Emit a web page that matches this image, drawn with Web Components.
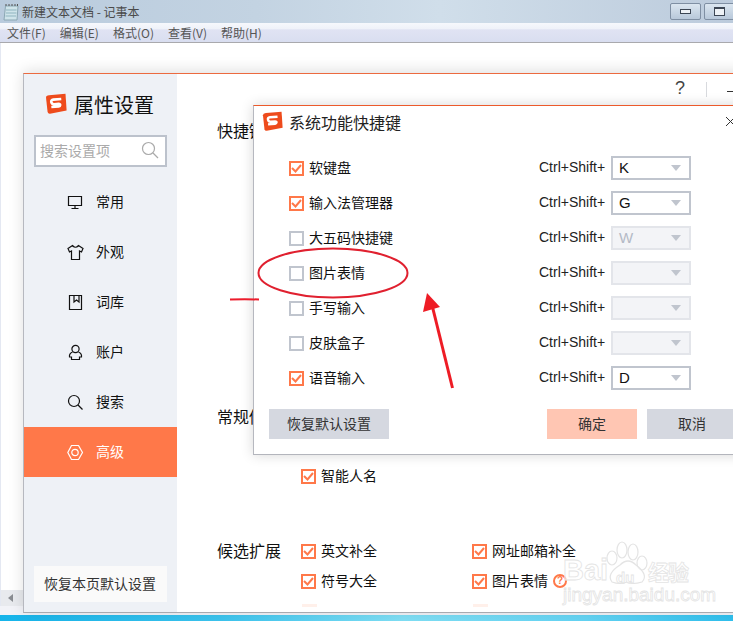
<!DOCTYPE html>
<html lang="zh">
<head>
<meta charset="utf-8">
<title>记事本</title>
<style>
  html, body { margin: 0; height: 100%; overflow: hidden; background: #fff; }
  body { font-family: "Noto Sans CJK SC", "Liberation Sans", sans-serif; color: #111; }
  settings-window setting-check { position: absolute; }
</style>
</head>
<body>
<notepad-window>
  <settings-window>
    <setting-check slot="content" style="left:277px;top:391px" checked>智能人名</setting-check>
    <setting-check slot="content" style="left:277px;top:466px" checked>英文补全</setting-check>
    <setting-check slot="content" style="left:277px;top:496px" checked>符号大全</setting-check>
    <setting-check slot="content" style="left:448px;top:466px" checked>网址邮箱补全</setting-check>
    <setting-check slot="content" style="left:448px;top:496px" checked help>图片表情</setting-check>
  </settings-window>
  <shortcut-dialog slot="overlay"></shortcut-dialog>
  <paint-marks slot="overlay"></paint-marks>
  <baidu-mark slot="overlay"></baidu-mark>
</notepad-window>

<script>
const LOGO = (size) => `
  <svg width="${size}" height="${size}" viewBox="0 0 22 22" aria-hidden="true">
    <path d="M4 2.2 20.5 .8 21.6 17.6 5 20.8 Q3 21 2.6 19L1 4.4Q1 2.5 4 2.2Z" fill="#ee4b1c"/>
    <path d="M16.6 6.4H8.6Q6 6.5 6.4 8.8T9 11.1H13.6Q15.2 11.3 15 12.4T13.4 13.6H6" fill="none" stroke="#fff" stroke-width="2.6" transform="rotate(-5 11 10)"/>
  </svg>`;

const CHECKMARK = `<svg width="11" height="11" viewBox="0 0 11 11"><path d="M1 5 4.5 8.5 10 2" fill="none" stroke="#ff7849" stroke-width="2"/></svg>`;

class NotepadWindow extends HTMLElement {
  connectedCallback() {
    const shadow = this.attachShadow({ mode: "open" });
    const menus = ["文件(F)", "编辑(E)", "格式(O)", "查看(V)", "帮助(H)"];
    shadow.innerHTML = `
      <style>
        :host { display: flex; flex-direction: column; width: 733px; height: 621px; position: relative; overflow: hidden; background: #e4e8f2; }
        .title { height: 23px; display: flex; align-items: center; padding-left: 3px; gap: 3px; font-size: 12px; color: #4a4a4a;
          background: linear-gradient(90deg, #b9cbdd 0%, #c3d3e2 35%, #d0deea 60%, #bccbdc 100%); }
        .title svg { flex: none; }
        .controls { margin-left: auto; display: flex; gap: 3px; align-self: flex-start; margin-top: 3px; margin-right: -2px; }
        .controls span { width: 29px; height: 15px; border: 1px solid #7f8fa3; border-radius: 2px; display: flex; align-items: center; justify-content: center;
          background: linear-gradient(#dbe6f0, #b8c8da); }
        .controls i { display: block; border: 1px solid #3c4654; background: #eef2f6; }
        .menu { height: 19px; display: flex; font-size: 12px; color: #555; padding-left: 7px; gap: 14px; align-items: center;
          background: linear-gradient(#f6f8fc 0, #eff2f9 30%, #e0e3f3 36%, #d9def0 100%); border-bottom: 1px solid #a9a9ad; }
        .page { flex: 1; margin-left: 1px; background: #fff; position: relative; }
        .hscroll { position: absolute; left: 1px; bottom: 15px; width: 22px; height: 16px; background: #e8eaee; display: flex; align-items: center; padding-left: 7px; box-sizing: border-box; }
        .hscroll i { width: 0; height: 0; border: 4px solid transparent; border-right: 5px solid #8a8d92; border-left: 0; }
        .frame { position: absolute; left: 0; right: 0; bottom: 6px; height: 9px; background: #f2f3f8; }
        .taskbar { position: absolute; left: 0; right: 0; bottom: 0; height: 6px;
          background: linear-gradient(90deg, #16b4ea, #3cc4ee 30%, #80dff5 55%, #64d4f4 80%, #2fc0ee); }
      </style>
      <div class="title">
        <svg width="16" height="18" viewBox="0 0 16 18"><path d="M2.5 3H15L14 17H1Z" fill="#cfe4ea" stroke="#8ba7b3"/><path d="M3 7H13.5M3 10H13.5M2.5 13H13" stroke="#8fb4bf"/><path d="M3 3V1M6 3V1M9 3V1M12 3V1M14.5 3V1" stroke="#555"/></svg>
        <span>新建文本文档 - 记事本</span>
        <div class="controls"><span><i style="width:9px;height:3px"></i></span><span><i style="width:9px;height:6px;border-width:2px 1px 1px"></i></span></div>
      </div>
      <div class="menu">${menus.map((m) => `<span>${m}</span>`).join("")}</div>
      <div class="page"></div>
      <div class="frame"></div>
      <div class="hscroll"><i></i></div>
      <div class="taskbar"></div>
      <slot></slot>
      <slot name="overlay"></slot>`;
  }
}

class SettingsWindow extends HTMLElement {
  connectedCallback() {
    const shadow = this.attachShadow({ mode: "open" });
    const nav = [
      ["常用", `<path d="M1.5 2.5H14.5V11.5H1.5ZM8 11.5V14M4.5 14.5H11.5"/>`],
      ["外观", `<path d="M5.5 1.5 1 4.5 2.5 8 4.5 7V15.5H12.5V7L14.5 8 16 4.5 11.5 1.5Q8.5 5 5.5 1.5Z"/>`],
      ["词库", `<path d="M2.5 1.5H14.5V15.5H2.5ZM5 1.5V1M7 2V8L9.5 6 12 8V2"/>`],
      ["账户", `<circle cx="8.5" cy="5" r="3.6"/><path d="M5.5 8Q2 9.5 2.5 13H4.5V15.5H12.5V13H14.5Q15 9.5 11.5 8"/>`],
      ["搜索", `<circle cx="7" cy="7" r="5.5"/><path d="M11 11 15.5 15.5"/>`],
      ["高级", `<path d="M4.5 1.5H11.5L15.5 8.5 11.5 15.5H4.5L.8 8.5Z" stroke-linejoin="round"/><circle cx="8" cy="8.5" r="3.2"/>`],
    ];
    shadow.innerHTML = `
      <style>
        :host { position: absolute; left: 23px; top: 73px; width: 760px; height: 540px; box-sizing: border-box; display: flex; background: #fff;
          border-top: 1px solid #ec6a3f; border-left: 1px solid #b6b8bf; border-bottom: 1px solid #a8aab0;
          box-shadow: 0 -2px 14px rgba(0,0,0,.13); }
        .side { width: 153px; background: #eef1f6; display: flex; flex-direction: column; }
        .brand { display: flex; align-items: center; gap: 7px; padding: 16px 0 0 21px; height: 28px; font-size: 20px; color: #111; }
        .search { margin: 17px 10px 0; height: 32px; box-sizing: border-box; border: 2px solid #bcc2cc; background: #fff; display: flex; align-items: center;
          justify-content: space-between; padding: 0 6px 2px 4px; font-size: 14px; color: #aaa; }
        nav { margin-top: 10px; display: flex; flex-direction: column; }
        .reset { margin: auto 10px 10px; height: 36px; padding: 0 0 2px 10px; box-sizing: border-box; background: #fafafa; display: flex; align-items: center; font-size: 14px; color: #333; }
        .main { flex: 1; position: relative; }
        .label { position: absolute; left: 40px; font-size: 16px; line-height: 22px; color: #111; }
        .help { position: absolute; left: 498px; top: 4px; font: 18px "Liberation Sans", sans-serif; color: #444; }
        .sep { position: absolute; left: 529px; top: 8px; width: 1px; height: 15px; background: #d8dade; }
        .min { position: absolute; left: 550px; top: 17px; width: 8px; height: 1px; background: #333; }
        .fade { position: absolute; left: 0; right: 0; bottom: 0; height: 12px; background: linear-gradient(rgba(255,255,255,.85), #fff); }
        .ghost { position: absolute; width: 15px; height: 3px; top: 530px; background: #fff0ea; }
      </style>
      <div class="side">
        <div class="brand">${LOGO(22)}<span>属性设置</span></div>
        <div class="search"><span>搜索设置项</span>
          <svg width="18" height="18" viewBox="0 0 18 18" fill="none" stroke="#aaa" stroke-width="1.2"><circle cx="7.5" cy="7.5" r="6"/><path d="M12 12 17 17"/></svg>
        </div>
        <nav>${nav.map(([t, p], i) => `<nav-item ${i === 5 ? "active" : ""} label="${t}"><svg slot="icon" width="17" height="17" viewBox="0 0 17 17" fill="none" stroke="currentColor" stroke-width="1.2">${p}</svg></nav-item>`).join("")}</nav>
        <div class="reset">恢复本页默认设置</div>
      </div>
      <div class="main">
        <span class="help">?</span><span class="sep"></span><span class="min"></span>
        <span class="label" style="top:45px">快捷键</span>
        <span class="label" style="top:331px">常规修</span>
        <span class="label" style="top:465px">候选扩展</span>
      </div>
      <slot name="content"></slot>
      <div class="fade" style="left:154px"></div>
      <span class="ghost" style="left:278px"></span>
      <span class="ghost" style="left:449px"></span>`;
  }
}

class NavItem extends HTMLElement {
  connectedCallback() {
    const shadow = this.attachShadow({ mode: "open" });
    shadow.innerHTML = `
      <style>
        :host { display: flex; height: 50px; align-items: center; padding-left: 43px; gap: 12px; font-size: 14px; color: #111; }
        :host([active]) { background: #ff7849; color: #fff; }
        ::slotted(svg) { flex: none; }
        span { padding-bottom: 2px; }
      </style>
      <slot name="icon"></slot><span>${this.getAttribute("label")}</span>`;
  }
}

class SettingCheck extends HTMLElement {
  connectedCallback() {
    const shadow = this.attachShadow({ mode: "open" });
    const on = this.hasAttribute("checked");
    const help = this.hasAttribute("help");
    shadow.innerHTML = `
      <style>
        :host { display: flex; align-items: center; gap: 5px; font-size: 14px; line-height: 20px; color: #111; white-space: nowrap; }
        .box { width: 15px; height: 15px; box-sizing: border-box; border: 2px solid #c0c5ce; display: flex; align-items: center; justify-content: center; background: #fff; }
        .box.on { border-color: #ff7849; }
        .text { padding-bottom: 2px; }
        .q { width: 14px; height: 14px; box-sizing: border-box; border: 2px solid #ff7849; border-radius: 50%; color: #ff7849; font: bold 10px/10px "Liberation Sans", sans-serif; text-align: center; }
      </style>
      <span class="box ${on ? "on" : ""}">${on ? CHECKMARK : ""}</span>
      <span class="text"><slot></slot></span>${help ? `<span class="q">?</span>` : ""}`;
  }
}

class KeySelect extends HTMLElement {
  connectedCallback() {
    const shadow = this.attachShadow({ mode: "open" });
    shadow.innerHTML = `
      <style>
        :host { display: flex; width: 80px; height: 24px; box-sizing: border-box; border: 2px solid #c0c5ce; background: #fff; align-items: center; justify-content: space-between; padding: 0 8px 1px 6px;
          font: 15px "Liberation Sans", sans-serif; color: #111; }
        :host([disabled]) { border-color: #e3e5ea; background: #f3f4f7; color: #b4bac6; }
        i { width: 0; height: 0; border: 5.5px solid transparent; border-top: 6px solid #c0c5ce; border-bottom: 0; }
      </style>
      <span><slot></slot></span><i></i>`;
  }
}

class ShortcutDialog extends HTMLElement {
  connectedCallback() {
    const shadow = this.attachShadow({ mode: "open" });
    const rows = [
      ["软键盘", "K", 1], ["输入法管理器", "G", 1], ["大五码快捷键", "W", 0], ["图片表情", "", 0],
      ["手写输入", "", 0], ["皮肤盒子", "", 0], ["语音输入", "D", 1],
    ];
    shadow.innerHTML = `
      <style>
        :host { position: absolute; left: 253px; top: 105px; width: 500px; height: 350px; box-sizing: border-box; background: #fff; display: flex; flex-direction: column;
          border-top: 1px solid #ec5a2b; border-left: 1px solid #b6b8bf; border-bottom: 1px solid #b3b5bc; box-shadow: 0 0 12px rgba(0,0,0,.16); }
        .head { display: flex; align-items: center; gap: 6px; height: 31px; padding-left: 8px; font-size: 16px; color: #222; position: relative; }
        .x { position: absolute; left: 471px; top: 10px; }
        .rows { padding: 19px 0 0 35px; display: grid; grid-template-columns: 250px 72px 80px; grid-auto-rows: 24px; row-gap: 11px; align-items: center; }
        .rows > span { font: 14px "Liberation Sans", sans-serif; color: #222; white-space: nowrap; padding-bottom: 2px; }
        .actions { margin-top: 19px; padding-left: 15px; display: flex; gap: 10px; font-size: 14px; color: #333; }
        .btn { height: 30px; padding-bottom: 2px; box-sizing: border-box; display: flex; align-items: center; justify-content: center; background: #d5d8e0; }
        .reset { width: 120px; margin-right: 148px; }
      </style>
      <div class="head">${LOGO(21)}<span>系统功能快捷键</span>
        <svg class="x" width="11" height="11" viewBox="0 0 11 11" stroke="#333" fill="none"><path d="M1 1 10 10M10 1 1 10"/></svg></div>
      <div class="rows">
        ${rows.map(([t, k, on]) => `
          <setting-check ${on ? "checked" : ""}>${t}</setting-check>
          <span>Ctrl+Shift+</span>
          <key-select ${on ? "" : "disabled"}>${k}</key-select>`).join("")}
      </div>
      <div class="actions">
        <div class="btn reset">恢复默认设置</div>
        <div class="btn" style="width:90px;background:#ffc6b3">确定</div>
        <div class="btn" style="width:90px">取消</div>
      </div>`;
  }
}

class PaintMarks extends HTMLElement {
  connectedCallback() {
    const shadow = this.attachShadow({ mode: "open" });
    shadow.innerHTML = `
      <style>:host { position: absolute; inset: 0; pointer-events: none; } svg { display: block; }</style>
      <svg width="733" height="621" viewBox="0 0 733 621" fill="none">
        <ellipse cx="333" cy="273" rx="74.5" ry="24.5" stroke="#e0202f" stroke-width="2"/>
        <path d="M230 299.5Q245 299 259 299.5" stroke="#ec1c2c" stroke-width="2"/>
        <path d="M452.5 388 432 305" stroke="#ee1c25" stroke-width="3"/>
        <path d="M427 293 423 312 440 307Z" fill="#ee1c25"/>
      </svg>`;
  }
}

class BaiduMark extends HTMLElement {
  connectedCallback() {
    const shadow = this.attachShadow({ mode: "open" });
    shadow.innerHTML = `
      <style>
        :host { position: absolute; left: 560px; top: 535px; width: 140px; height: 76px; pointer-events: none; }
        span { position: absolute; color: rgba(255,255,255,.6); -webkit-text-stroke: .8px #e4e4e4; white-space: nowrap; }
        svg { position: absolute; left: 0; top: 0; }
      </style>
      <svg width="140" height="60" viewBox="0 0 140 60" fill="rgba(255,255,255,.5)" stroke="#e4e4e4" stroke-width="1.2">
        <ellipse cx="52" cy="23" rx="5" ry="7"/><ellipse cx="62" cy="15" rx="5" ry="8"/><ellipse cx="73" cy="17" rx="5" ry="8"/><ellipse cx="82" cy="28" rx="5" ry="7"/>
        <path d="M60 30Q68 22 76 30 89 40 82 47 72 50 67 47 60 50 52 47 46 39 60 30Z"/>
      </svg>
      <span style="left:3px;top:19px;font:bold 29px/32px 'Liberation Sans',sans-serif">Bai</span>
      <span style="left:56px;top:35px;font:bold 15px/16px 'Liberation Sans',sans-serif">du</span>
      <span style="left:88px;top:23px;font:bold 21px/26px 'Noto Sans CJK SC',sans-serif;letter-spacing:-1px">经验</span>
      <span style="left:3px;top:50px;font:19px/20px 'Liberation Sans',sans-serif">jingyan.baidu.com</span>`;
  }
}

customElements.define("notepad-window", NotepadWindow);
customElements.define("settings-window", SettingsWindow);
customElements.define("nav-item", NavItem);
customElements.define("setting-check", SettingCheck);
customElements.define("key-select", KeySelect);
customElements.define("shortcut-dialog", ShortcutDialog);
customElements.define("paint-marks", PaintMarks);
customElements.define("baidu-mark", BaiduMark);
</script>
</body>
</html>
